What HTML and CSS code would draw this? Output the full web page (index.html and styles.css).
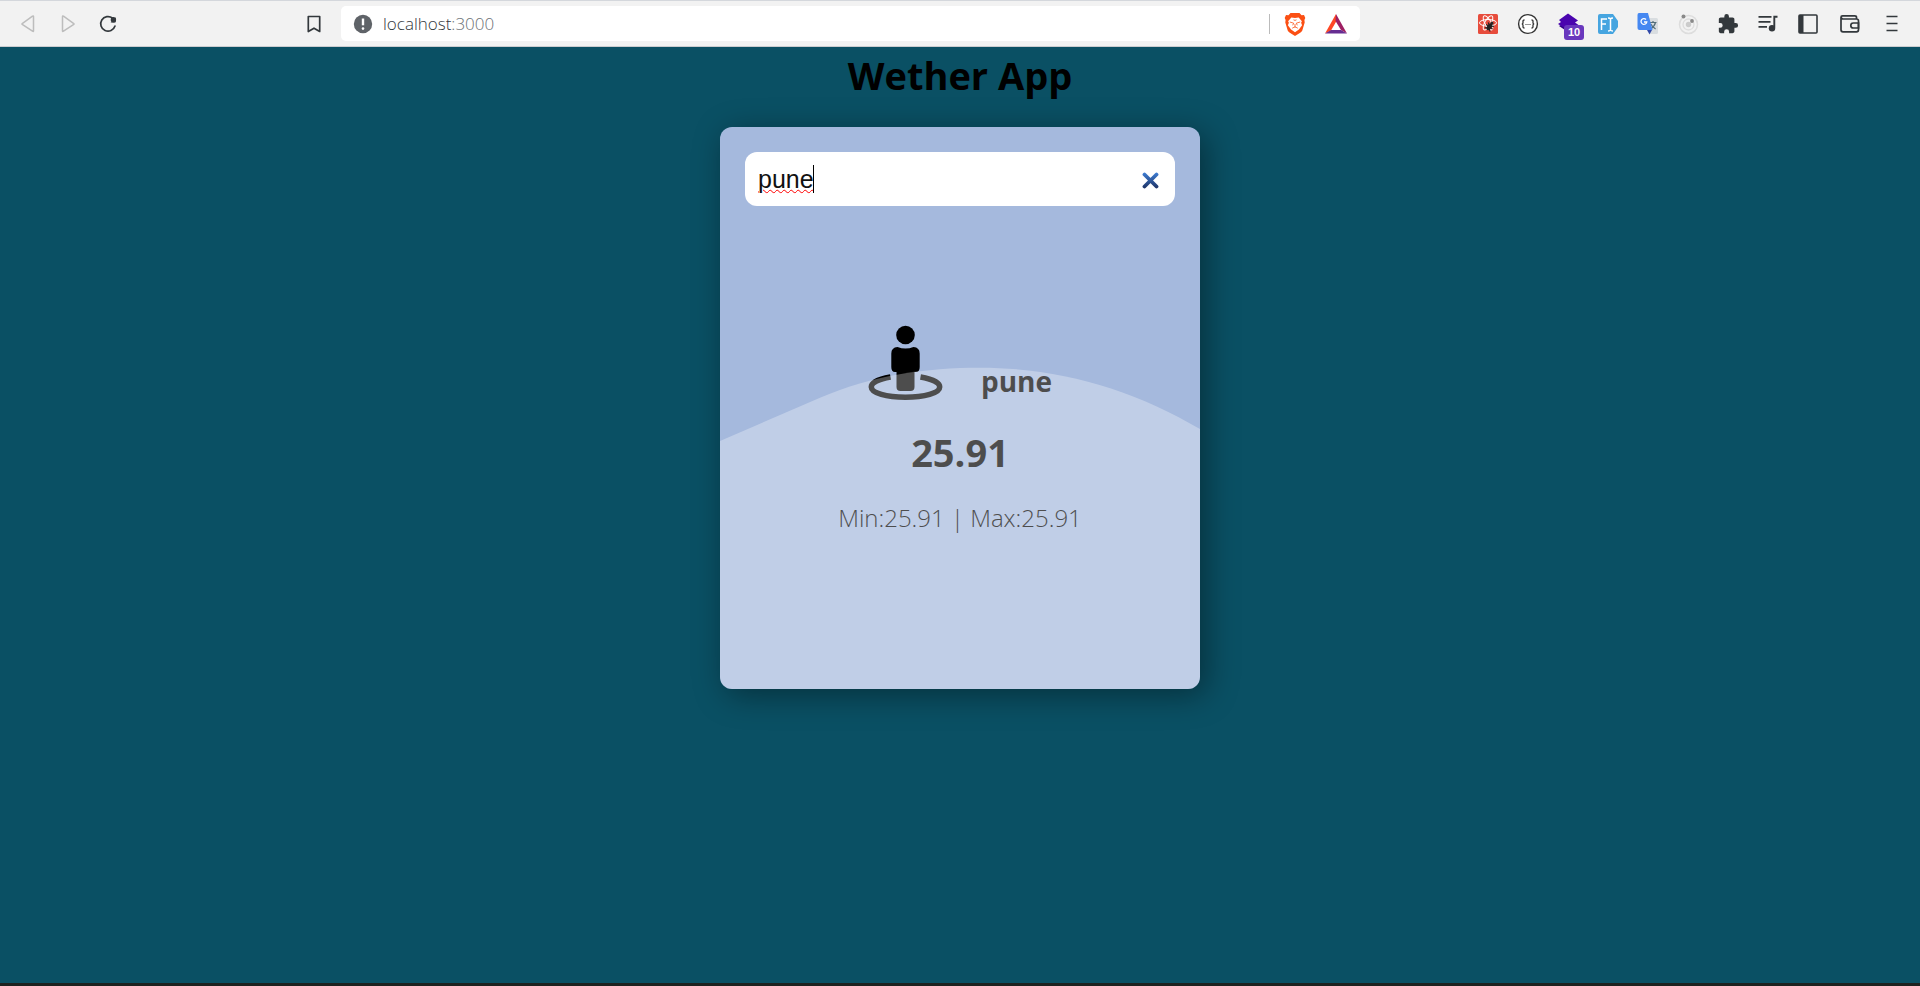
FILE: index.html
```html
<!DOCTYPE html>
<html lang="en">
<head>
<meta charset="utf-8">
<title>Wether App</title>
<link rel="stylesheet" href="styles.css">
</head>
<body>
<header class="toolbar">
  <div class="nav">
    <button class="tool" aria-label="Back"><svg width="20" height="20" viewBox="0 0 20 20" fill="none" stroke="#bdbdbd" stroke-width="1.5" stroke-linejoin="round"><path d="M15.500 2.500v14.500q0 .6-.6.4L4.200 10.400q-.5-.4 0-.8L14.500 2.200q1-.4 1 .3z"/></svg></button>
    <button class="tool" aria-label="Forward"><svg width="20" height="20" viewBox="0 0 20 20" fill="none" stroke="#bdbdbd" stroke-width="1.5" stroke-linejoin="round"><path d="M4.500 2.500v14.500q0 .6.6.4l10.700-7q.5-.4 0-.8L5.500 2.200q-1-.4-1 .3z"/></svg></button>
    <button class="tool" aria-label="Reload"><svg width="20" height="20" viewBox="0 0 20 20"><path d="M14.600 4.200A7.300 7.300 0 1 0 17 12" fill="none" stroke="#33383c" stroke-width="1.700" stroke-linecap="round"/><path d="M17.700 3.200v4.600q0 .6-.6.6h-4.500z" fill="#33383c"/><circle cx="15.400" cy="5.700" r="2.700" fill="#33383c"/></svg></button>
  </div>
  <button class="tool bookmark" aria-label="Bookmark"><svg width="20" height="20" viewBox="0 0 20 20"><path d="M4.300 2.500h11.400v15L10 14.200l-5.700 3.300z" fill="none" stroke="#33383c" stroke-width="1.700" stroke-linejoin="round"/></svg></button>
  <div class="omnibox">
    <svg width="20" height="20" viewBox="0 0 20 20"><circle cx="10" cy="10" r="9.200" fill="#5f6368"/><path d="M10 4.500v6.800" stroke="#fff" stroke-width="2.400"/><circle cx="10" cy="14.600" r="1.300" fill="#fff"/></svg>
    <p class="address">localhost<span class="port">:3000</span></p>
    <div class="shields">
      <span class="rule"></span>
      <button class="tool" aria-label="Brave Shields"><svg width="22" height="24" viewBox="0 0 22 24"><path d="M6.500 1h9l2 2.200 2.500-.1 1.300 3-.9 2 .3 2.500-2.500 8.200q-.6 1.200-2 2L11 24l-5.200-3.200q-1.400-.8-2-2L1.300 10.600l.3-2.500-.9-2L2 3.100l2.500.1z" fill="#fb4f13"/><path d="M7.300 5.500l3.700.6 3.700-.6 3.200 3.700-.8 1.500 1 2.500-3.200 4.300L11 20.300l-3.900-2.800L3.900 13.200l1-2.500-.8-1.500z" fill="#fff"/><path d="M5.800 10l3.900 1.200-1 2.100M16.200 10l-3.900 1.200 1 2.100M11 12v3.500M8.200 16.200l2.800-1.400 2.800 1.400M9.500 7.800L11 8.400l1.500-.6" fill="none" stroke="#fb4f13" stroke-width=".8"/></svg></button>
      <button class="tool" aria-label="Brave Rewards"><svg width="24" height="22" viewBox="0 0 24 22"><path d="M12 1L1 20.500l6-3L12.500 8z" fill="#ff4724"/><path d="M12 1l11 19.500-6-3.500L11.500 8z" fill="#9e1f63"/><path d="M1 20.500h22L17 17H7z" fill="#662d91"/></svg></button>
    </div>
  </div>
  <div class="extensions">
    <button class="tool" aria-label="React tools"><svg width="22" height="22" viewBox="0 0 22 22"><rect x="1" y="1" width="20" height="20" rx="1.500" fill="#e74c3c"/><g fill="none" stroke="#fff" stroke-width="1"><ellipse cx="11" cy="9.800" rx="8.500" ry="3.300"/><ellipse cx="11" cy="9.800" rx="8" ry="3.100" transform="rotate(60 11 9.800)"/><ellipse cx="11" cy="9.800" rx="8" ry="3.100" transform="rotate(120 11 9.800)"/></g><g fill="#222" stroke="#222" stroke-width="1" transform="rotate(35 13 13)"><ellipse cx="13" cy="14" rx="1.700" ry="3.400"/><circle cx="13" cy="9.500" r="1"/><path d="M9.500 11l2.500 2M16.500 11l-2.500 2M9 14h8M9.800 17.500l2.500-2M16.200 17.500l-2.500-2"/></g></svg></button>
    <button class="tool" aria-label="JSON viewer"><svg width="22" height="22" viewBox="0 0 22 22" fill="none" stroke="#333"><circle cx="11" cy="11" r="9.400" fill="#fff" stroke-width="1.400"/><path d="M7.500 7q-1.700 0-1.500 1.800Q6.200 11 4.800 11q1.400 0 1.200 2.200Q5.800 15 7.500 15M14.500 7q1.700 0 1.500 1.800-.2 2.200 1.200 2.200-1.400 0-1.200 2.200.2 1.800-1.500 1.800" stroke-width="1.300"/><path d="M8.500 11.500h1M10.500 11.500h1M12.500 11.500h1"/></svg></button>
    <button class="tool" aria-label="Layers"><svg width="22" height="22" viewBox="0 0 22 22"><path d="M2 13l9-5 10 5-10 6z" fill="#2e0080"/><path d="M11 .5l10 7-3 2 3.500 2.500L11 17 1 11l3-2-2-2z" fill="#4a05ae"/></svg><span class="badge">10</span></button>
    <button class="tool" aria-label="Font finder"><svg width="22" height="22" viewBox="0 0 22 22"><path d="M3 1h13l5 7v6l-5 7H3q-2 0-2-2V3q0-2 2-2z" fill="#46a5e0"/><path d="M4.500 17v-11h5.500M4.500 11h4.500M11 5q2 0 2.500 1 .5-1 2.500-1M13.500 6v11M11 18q2 0 2.500-1 .5 1 2.500 1" fill="none" stroke="#fff" stroke-width="1.500"/></svg></button>
    <button class="tool" aria-label="Translate"><svg width="22" height="22" viewBox="0 0 22 22"><path d="M9 5h10.500q1.500 0 1.500 1.500v13q0 1.500-1.500 1.500H13z" fill="#d9dde0"/><path d="M12.500 9.500h7M16 8v1.500M18.500 9.500q-1 4-5 6.500M13.800 11q1.500 3 4.800 5" fill="none" stroke="#546e7a" stroke-width="1.200"/><path d="M10 17h5l-2.500 4.500z" fill="#3048a8"/><path d="M2 0h9l4.500 17H2.500Q.5 17 .5 15V2Q.5 0 2 0z" fill="#4688f1"/><path d="M9 6.500A2.900 2.900 0 1 0 9.800 9H7" fill="none" stroke="#fff" stroke-width="1.300"/></svg></button>
    <button class="tool" aria-label="Orbit"><svg width="22" height="22" viewBox="0 0 22 22" fill="none"><circle cx="11.500" cy="11.500" r="9" stroke="#ddd" stroke-width="1.500"/><circle cx="11.500" cy="11.500" r="5.500" stroke="#ddd" stroke-width="1.300"/><circle cx="11.500" cy="11.500" r="2.700" fill="#ccc"/><circle cx="6.500" cy="3.500" r="2" fill="#888"/><circle cx="15" cy="8" r="1.900" fill="#888"/></svg></button>
    <button class="tool" aria-label="Extensions"><svg width="22" height="22" viewBox="0 0 24 24"><path fill="#33383c" d="M20.500 11H19V7c0-1.100-.9-2-2-2h-4V3.500a2.500 2.500 0 0 0-5 0V5H4c-1.100 0-2 .9-2 2v3.800h1.500a2.700 2.700 0 0 1 0 5.400H2V20c0 1.100.9 2 2 2h3.800v-1.500a2.700 2.700 0 0 1 5.400 0V22H17c1.100 0 2-.9 2-2v-4h1.500a2.500 2.500 0 0 0 0-5z"/></svg></button>
    <button class="tool" aria-label="Media"><svg width="22" height="22" viewBox="0 0 22 22"><path d="M1.500 3.800h13M1.500 8.800h12M1.500 13.800h8.500" stroke="#33383c" stroke-width="1.800"/><path d="M20.500 3.800h-3.200v11" fill="none" stroke="#33383c" stroke-width="1.900"/><circle cx="15" cy="15.300" r="3.200" fill="#33383c"/></svg></button>
    <button class="tool" aria-label="Sidebar"><svg width="22" height="22" viewBox="0 0 22 22"><rect x="2" y="2" width="18" height="18" rx="1" fill="none" stroke="#33383c" stroke-width="1.600"/><path d="M2 2h4.500v18H2z" fill="#33383c"/></svg></button>
    <button class="tool spaced" aria-label="Wallet"><svg width="22" height="22" viewBox="0 0 22 22" fill="none" stroke="#33383c" stroke-width="1.700"><path d="M17.500 6V4.500q0-1.700-1.700-1.700H3.500q-1.500 0-1.500 1.500v12.500q0 2 2 2h13.500q2 0 2-2V8q0-2-2-2H4Q2.500 6 2.200 4.500"/><path d="M19.500 10h-5.200a2.500 2.500 0 0 0 0 5h5.200z"/></svg></button>
    <button class="tool spaced" aria-label="Menu"><svg width="22" height="22" viewBox="0 0 22 22"><path d="M5.500 3.500h11M5.500 10.500h11M5.500 17.500h11" stroke="#33383c" stroke-width="1.700"/></svg></button>
  </div>
</header>
<main class="app">
  <h1 class="title">Wether App</h1>
  <section class="card">
    <div class="search">
      <input class="search-input" type="text" value="pune" aria-label="City" spellcheck="false">
      <span class="caret"></span>
      <button class="clear" aria-label="Clear"><svg width="17" height="17" viewBox="0 0 17 17"><defs><linearGradient id="clear-blue" gradientUnits="userSpaceOnUse" x1="0" y1="0" x2="0" y2="17"><stop offset="0" stop-color="#3f80d8"/><stop offset="1" stop-color="#1c2f60"/></linearGradient></defs><path d="M2.500 2.500l12 12M14.500 2.500l-12 12" stroke="url(#clear-blue)" stroke-width="3.800" stroke-linecap="round"/></svg></button>
    </div>
    <div class="info">
      <h2 class="city">
        <svg width="75" height="76" viewBox="0 0 75 76"><circle cx="37.500" cy="10" r="9.300"/><path d="M29.500 22q4 1.500 8 1.500t8-1.500q6.200.500 6.200 6.500v13.500q0 5-3.700 5h-1.500v15q0 4-4 4h-10q-4 0-4-4v-15H27q-3.700 0-3.700-5V28.500q0-6 6.200-6.500z"/><path d="M22.500 52C11 54 3.300 57.500 3.300 62c0 6 15.300 10.300 34.200 10.300S71.700 68 71.700 62c0-4.500-7.700-8-19.200-10" fill="none" stroke="#000" stroke-width="5.500"/></svg>
        <span class="city-name">pune</span>
      </h2>
      <p class="temperature">25.91</p>
      <p class="range">Min:25.91 | Max:25.91</p>
    </div>
    <svg class="wave" viewBox="0 0 480 562" preserveAspectRatio="none" aria-hidden="true"><path d="M0 314L100 270.700C153 248 206 240.700 260 240.700C340 240.700 412 262 480 302V562H0z" fill="#fff" fill-opacity=".3"/></svg>
  </section>
</main>
</body>
</html>
```
FILE: styles.css
```css
* { box-sizing: border-box; margin: 0; padding: 0; }

body {
  display: flex;
  flex-direction: column;
  min-height: 100vh;
  background: #0a5064;
  border-bottom: 3px solid #1e211f;
  font-family: "Open Sans", "Noto Sans", sans-serif;
}

button { border: 0; background: none; }
svg { display: block; flex: none; }

.toolbar {
  display: flex;
  align-items: center;
  height: 47px;
  padding: 0 17px 0 18px;
  background: #f2f2f2;
  border-top: 1px solid #d4d7dc;
  border-bottom: 1px solid #cccdd0;
}
.nav { display: flex; gap: 20px; width: 286px; }
.tool { display: flex; flex: none; position: relative; }
.omnibox {
  display: flex;
  align-items: center;
  flex: 1;
  height: 35px;
  margin-left: 17px;
  padding: 0 12px;
  border-radius: 5px;
  background: #fff;
}
.address {
  flex: 1;
  padding-left: 10px;
  font-size: 17px;
  color: #33383c;
  font-weight: 300;
}
.port { color: #6b7075; }
.shields { display: flex; align-items: center; gap: 18px; }
.rule { width: 1px; height: 20px; background: #bbb; margin-right: -4px; }
.extensions { display: flex; gap: 18px; padding-left: 117px; }
.spaced { margin-left: 2px; }
.badge {
  position: absolute;
  left: 7px;
  top: 12px;
  padding: 0 4px;
  border-radius: 3px;
  background: #6938bd;
  color: #fff;
  font-size: 11px;
  line-height: 15px;
  font-weight: 700;
}

.app { display: flex; flex-direction: column; align-items: center; }
.title { font-size: 38px; line-height: 56px; margin-bottom: 24px; color: #000; }

.card {
  position: relative;
  display: flex;
  flex-direction: column;
  width: 25%;
  min-height: 57vh;
  padding: 25px;
  border-radius: 12px;
  background: #a5b9dd;
  box-shadow: 6px 6px 32px rgba(0, 0, 0, .4);
  overflow: hidden;
}
.search { display: flex; position: relative; z-index: 1; }
.search-input {
  flex: 1;
  min-width: 0;
  height: 54px;
  padding: 0 50px 0 13px;
  border: 0;
  border-radius: 12px;
  outline: 0;
  background: #fff;
  font: 25px "Liberation Sans", Arial, sans-serif;
  color: #111;
  text-decoration: underline wavy #f00 1px;
}
.caret { position: absolute; left: 68px; top: 13px; width: 1px; height: 28px; background: #000; }
.clear { position: absolute; right: 16px; top: 20px; }

.info {
  display: flex;
  flex: 1;
  flex-direction: column;
  align-items: center;
  justify-content: center;
  padding-bottom: 10px;
  color: #000;
}
.city { display: flex; align-items: flex-end; gap: 38px; font-size: 28px; line-height: 36px; }
.city-name { padding-bottom: 2px; }
.temperature { font-size: 38px; line-height: 50px; font-weight: 700; margin-top: 26px; }
.range { font-size: 24px; line-height: 34px; font-weight: 300; margin-top: 24px; }
.wave { position: absolute; left: 0; top: 0; width: 100%; height: 100%; pointer-events: none; }
```
